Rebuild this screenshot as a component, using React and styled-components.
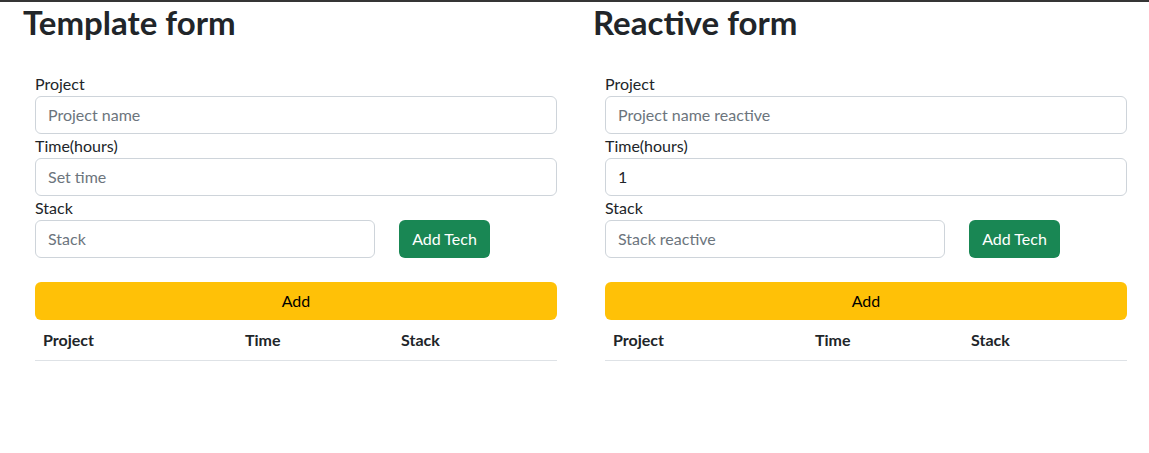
import React from 'react'
import styled, { createGlobalStyle } from 'styled-components'

const GlobalStyle = createGlobalStyle`
  * { box-sizing: border-box; }
  body {
    margin: 0;
    font-family: Lato, "Noto Sans", sans-serif;
    font-size: 16px;
    line-height: 1.5;
    color: #212529;
    background: #fff;
  }
`

const TopRule = styled('div')`
  height: 2px;
  background: #353535;
`

const Page = styled('main')`
  display: grid;
  grid-template-columns: 570px 570px;
  padding-left: 23px;
`

const Column = styled('section')`
  display: flex;
  flex-direction: column;
`

const Heading = styled('h2')`
  margin: 1px 0 8px;
  font-size: 33px;
  font-weight: 700;
  line-height: 1.2;
`

const Form = styled('form')`
  width: 522px;
  margin: 21px 0 0 12px;
  display: flex;
  flex-direction: column;
`

const Label = styled('label')`
  display: block;
  line-height: 24px;
`

const Input = styled('input')`
  display: block;
  width: ${({ $width }) => $width || '100%'};
  height: 38px;
  padding: 6px 12px;
  font: inherit;
  color: #212529;
  border: 1px solid #ced4da;
  border-radius: 6px;
  background: #fff;

  &::placeholder {
    color: #6c757d;
    opacity: 1;
  }
`

const StackRow = styled('div')`
  display: flex;
  gap: 24px;
`

const Button = styled('button')`
  height: 38px;
  padding: 6px 12px;
  font: inherit;
  border: 1px solid transparent;
  border-radius: 6px;
  cursor: pointer;
  color: ${({ $variant }) => ($variant === 'success' ? '#fff' : '#000')};
  background: ${({ $variant }) => ($variant === 'success' ? '#198754' : '#ffc107')};
  width: ${({ $block }) => ($block ? '100%' : '91px')};
  margin-top: ${({ $block }) => ($block ? '24px' : '0')};
`

const Table = styled('table')`
  width: 100%;
  border-collapse: collapse;
`

const Th = styled('th')`
  text-align: left;
  padding: 8px;
  font-weight: 700;
  line-height: 24px;
  border-bottom: 1px solid #dee2e6;
  width: ${({ $width }) => $width};
`

const ProjectForm = ({ title, placeholders, time }) => (
  <Column>
    <Heading>{title}</Heading>
    <Form onSubmit={(e) => e.preventDefault()}>
      <Label>Project</Label>
      <Input placeholder={placeholders.project} />
      <Label>Time(hours)</Label>
      <Input placeholder="Set time" defaultValue={time} />
      <Label>Stack</Label>
      <StackRow>
        <Input $width="340px" placeholder={placeholders.stack} />
        <Button type="button" $variant="success">Add Tech</Button>
      </StackRow>
      <Button type="submit" $variant="warning" $block>Add</Button>
      <Table>
        <thead>
          <tr>
            <Th $width="202px">Project</Th>
            <Th $width="156px">Time</Th>
            <Th>Stack</Th>
          </tr>
        </thead>
        <tbody />
      </Table>
    </Form>
  </Column>
)

export default function App() {
  return (
    <>
      <GlobalStyle />
      <TopRule />
      <Page>
        <ProjectForm
          title="Template form"
          placeholders={{ project: 'Project name', stack: 'Stack' }}
        />
        <ProjectForm
          title="Reactive form"
          placeholders={{ project: 'Project name reactive', stack: 'Stack reactive' }}
          time="1"
        />
      </Page>
    </>
  )
}
